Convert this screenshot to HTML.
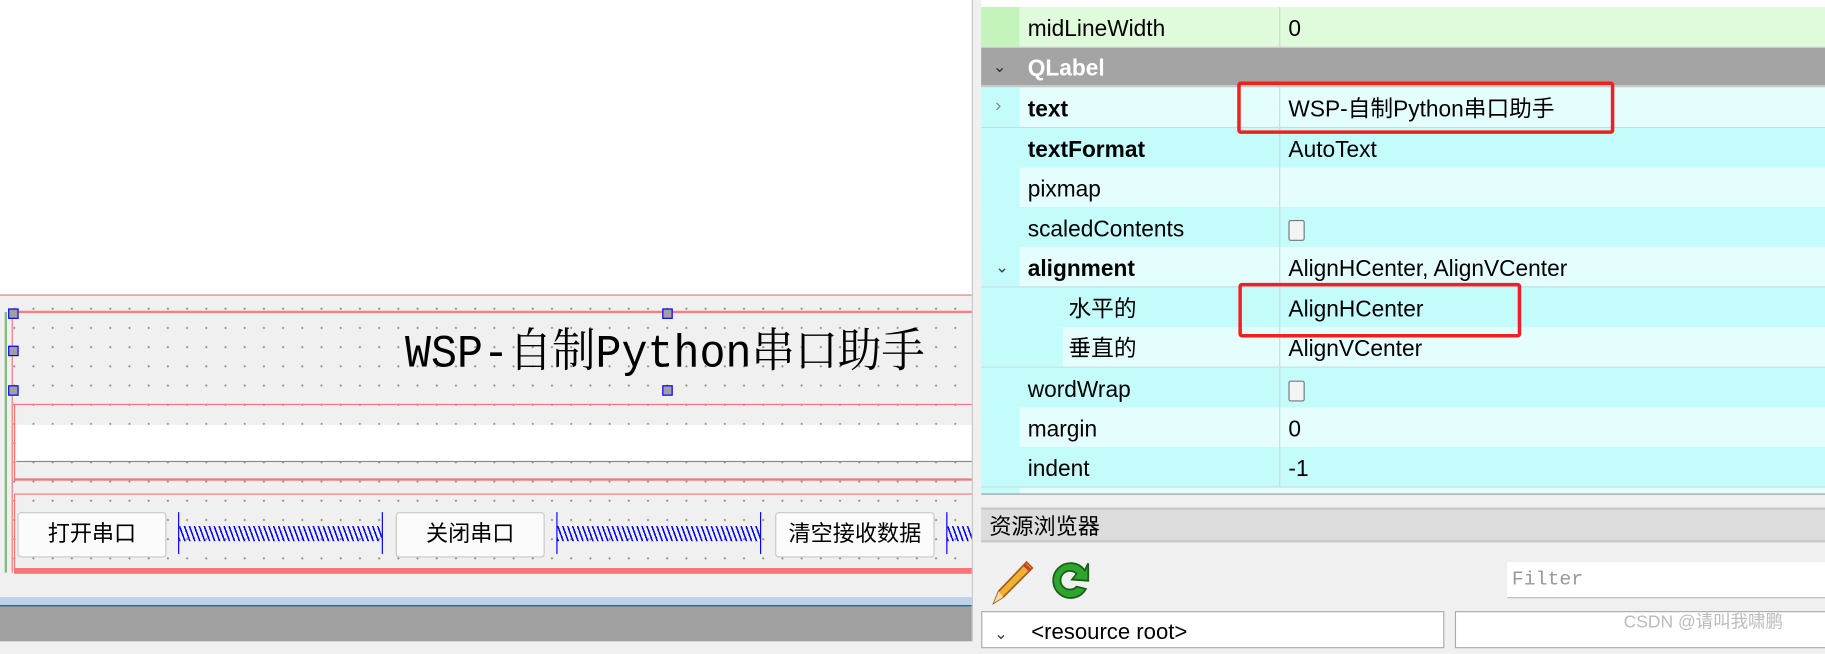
<!DOCTYPE html>
<html><head><meta charset="utf-8"><style>
html,body{margin:0;padding:0;width:1825px;height:641px;overflow:hidden;background:#f0f0f0}
#w{position:absolute;left:0;top:0;width:1568px;height:551px;transform:scale(1.16390);transform-origin:0 0;font-family:"Liberation Sans","Noto Sans CJK SC",sans-serif}
.a{position:absolute}
.dots{background-color:#f0f0f0;background-image:radial-gradient(circle,#8a8a8a 0.8px,transparent 1px);background-size:16.5px 16.5px;background-position:4px 3px}
.h{position:absolute;width:7px;height:7px;background:#a0a0a0;border:1px solid #0000ff}
.btn{position:absolute;top:440px;height:37px;background:#fbfbfb;border:1px solid #c8c8c8;border-radius:3px;font-size:19px;text-align:center;line-height:37px;color:#000}
.sp{position:absolute;top:452px;height:13px;background:repeating-linear-gradient(70deg,#0000ff 0 1.3px,transparent 1.3px 4px)}
.spb{position:absolute;top:440px;height:36px;width:1px;background:#0000ff}
.row{position:absolute;left:843px;width:725px;height:34px;border-bottom:1px solid #d0d8d8;font-size:19.5px}
.row .g{position:absolute;left:0;top:0;width:33px;height:34px}
.row .n{position:absolute;left:40px;top:1px;line-height:36px}
.row .v{position:absolute;left:264px;top:1px;line-height:36px}
.row .d{position:absolute;left:256px;top:0;width:1px;height:34px;background:#d0d8d8}
.cb{display:inline-block;width:12px;height:16px;border:1px solid #777;border-radius:2px;background:#f4f4f4;vertical-align:middle}
</style></head><body><div id="w">
<div class="a" style="left:0;top:0;width:835px;height:253px;background:#fff"></div>
<div class="a" style="left:0;top:253px;width:835px;height:260px;background:#f0f0f0"></div>
<div class="a dots" style="left:0;top:253px;width:835px;height:237px;border-top:1px solid #f07878"></div>
<div class="a" style="left:10px;top:267px;width:825px;height:70px;border-top:2px solid #f48080"></div>
<div class="a" style="left:4px;top:268px;width:2px;height:224px;background:#7cbf7c"></div>
<div class="a" style="left:10px;top:268px;width:1px;height:224px;background:#f07878"></div>
<div class="a" style="left:348px;top:282px;font-family:'Liberation Mono','Noto Serif CJK SC',monospace;font-size:40px;line-height:48px;white-space:nowrap;transform:scaleX(0.93);transform-origin:0 0;color:#000">WSP-自制Python串口助手</div>
<div class="h" style="left:7px;top:265px"></div><div class="h" style="left:569px;top:265px"></div>
<div class="h" style="left:7px;top:297px"></div>
<div class="h" style="left:7px;top:331px"></div><div class="h" style="left:569px;top:331px"></div>
<div class="a" style="left:12px;top:347px;width:823px;height:63px;border-top:1px solid #f07878;border-bottom:2px solid #f07878;border-left:1px solid #f07878"></div>
<div class="a" style="left:14px;top:365px;width:821px;height:31px;background:#fff;border-bottom:1px solid #888"></div>
<div class="a" style="left:12px;top:424px;width:823px;height:63px;border-top:1px solid #f07878;border-left:1px solid #f07878;border-bottom:5px solid #f47878"></div>
<div class="btn" style="left:15px;width:126px">打开串口</div>
<div class="btn" style="left:340px;width:126px">关闭串口</div>
<div class="btn" style="left:666px;width:135px">清空接收数据</div>
<div class="spb" style="left:153px"></div><div class="sp" style="left:154px;width:174px"></div><div class="spb" style="left:328px"></div>
<div class="spb" style="left:478px"></div><div class="sp" style="left:479px;width:174px"></div><div class="spb" style="left:653px"></div>
<div class="spb" style="left:813px"></div><div class="sp" style="left:814px;width:21px"></div>
<div class="a" style="left:0;top:513px;width:835px;height:7px;background:#bcd2ea;border-bottom:1px solid #0a4a6a"></div>
<div class="a" style="left:0;top:521px;width:835px;height:30px;background:#a0a0a0"></div>
<div class="a" style="left:835px;top:0;width:8px;height:551px;background:#f0f0f0;border-left:1px solid #c8c8c8"></div>
<div class="a" style="left:843px;top:0;width:725px;height:6px;background:#fff"></div>
<div class="row" style="top:6px;background:#e0fbdc"><div class="g" style="background:#c4f4bc"></div><div class="n">midLineWidth</div><div class="d"></div><div class="v">0</div></div>
<div class="row" style="top:41px;background:#a4a4a4;border-bottom:2px solid #c8c8c8;height:32px"><div class="n" style="line-height:34px;color:#fff;font-weight:bold">QLabel</div><div class="a" style="left:10px;top:0;line-height:32px;font-size:14px;color:#333">⌄</div></div>
<div class="row" style="top:75px;background:#e4fefe"><div class="g" style="background:#c4fcfc"></div><div class="a" style="left:12px;top:0;line-height:34px;font-size:16px;color:#888">›</div><div class="n" style="font-weight:bold">text</div><div class="d"></div><div class="v">WSP-自制Python串口助手</div></div>
<div class="row" style="top:110px;background:#c4fcfc"><div class="n" style="font-weight:bold">textFormat</div><div class="d"></div><div class="v">AutoText</div></div>
<div class="row" style="top:144px;background:#e4fefe"><div class="g" style="background:#c4fcfc"></div><div class="n">pixmap</div><div class="d"></div></div>
<div class="row" style="top:178px;background:#c4fcfc"><div class="n">scaledContents</div><div class="d"></div><div class="v"><span class="cb"></span></div></div>
<div class="row" style="top:212px;background:#e4fefe"><div class="g" style="background:#c4fcfc"></div><div class="a" style="left:12px;top:0;line-height:34px;font-size:14px;color:#444">⌄</div><div class="n" style="font-weight:bold">alignment</div><div class="d"></div><div class="v">AlignHCenter, AlignVCenter</div></div>
<div class="row" style="top:247px;background:#c4fcfc"><div class="n" style="left:75px">水平的</div><div class="d"></div><div class="v">AlignHCenter</div></div>
<div class="row" style="top:281px;background:#e4fefe"><div class="g" style="background:#c4fcfc;width:70px"></div><div class="n" style="left:75px">垂直的</div><div class="d"></div><div class="v">AlignVCenter</div></div>
<div class="row" style="top:316px;background:#c4fcfc"><div class="n">wordWrap</div><div class="d"></div><div class="v"><span class="cb"></span></div></div>
<div class="row" style="top:350px;background:#e4fefe"><div class="g" style="background:#c4fcfc"></div><div class="n">margin</div><div class="d"></div><div class="v">0</div></div>
<div class="row" style="top:384px;background:#c4fcfc"><div class="n">indent</div><div class="d"></div><div class="v">-1</div></div>
<div class="row" style="top:419px;height:5px;background:#e4fefe;border-bottom:1px solid #999"><div class="g" style="background:#c4fcfc;height:5px"></div></div>
<div class="a" style="left:1063px;top:70px;width:318px;height:39px;border:3px solid #f02020;border-radius:3px"></div>
<div class="a" style="left:1064px;top:243px;width:237px;height:41px;border:3px solid #f02020;border-radius:3px"></div>
<div class="a" style="left:843px;top:436px;width:725px;height:30px;background:#dcdcdc;border-top:2px solid #c8c8c8;border-bottom:2px solid #c8c8c8;font-size:19px;line-height:32px;padding-left:7px;box-sizing:border-box">资源浏览器</div>
<svg class="a" style="left:848px;top:478px" width="42" height="44" viewBox="0 0 42 44"><path d="M6 40 L10 30 L34 5 L39 10 L14 35 Z" fill="#f2b133" stroke="#a0601a" stroke-width="1.5"/><path d="M6 40 L10 30 L14 35 Z" fill="#f4d8a8"/><path d="M32 7 L37 12" stroke="#d04030" stroke-width="3"/></svg>
<svg class="a" style="left:899px;top:478px" width="42" height="42" viewBox="0 0 42 42"><path d="M33 12 A15 15 0 1 0 34 28 L26 26 A8 8 0 1 1 26 15 L22 20 L36 21 L36 6 Z" fill="#2ea52e" stroke="#156015" stroke-width="1.5"/></svg>
<div class="a" style="left:1295px;top:483px;width:273px;height:30px;background:#fff;border-bottom:1px solid #bbb;font-family:'Liberation Mono',monospace;font-size:17px;line-height:32px;color:#999;padding-left:4px">Filter</div>
<div class="a" style="left:843px;top:525px;width:396px;height:30px;background:#fff;border:1px solid #aaa;font-size:19px;line-height:36px"><span style="position:absolute;left:10px;font-size:14px;color:#444">⌄</span><span style="position:absolute;left:42px">&lt;resource root&gt;</span></div>
<div class="a" style="left:1250px;top:525px;width:318px;height:30px;background:#fff;border:1px solid #aaa"></div>
<div class="a" style="left:1395px;top:525px;font-size:15px;color:#bbb;line-height:20px">CSDN @请叫我啸鹏</div>
</div></body></html>
